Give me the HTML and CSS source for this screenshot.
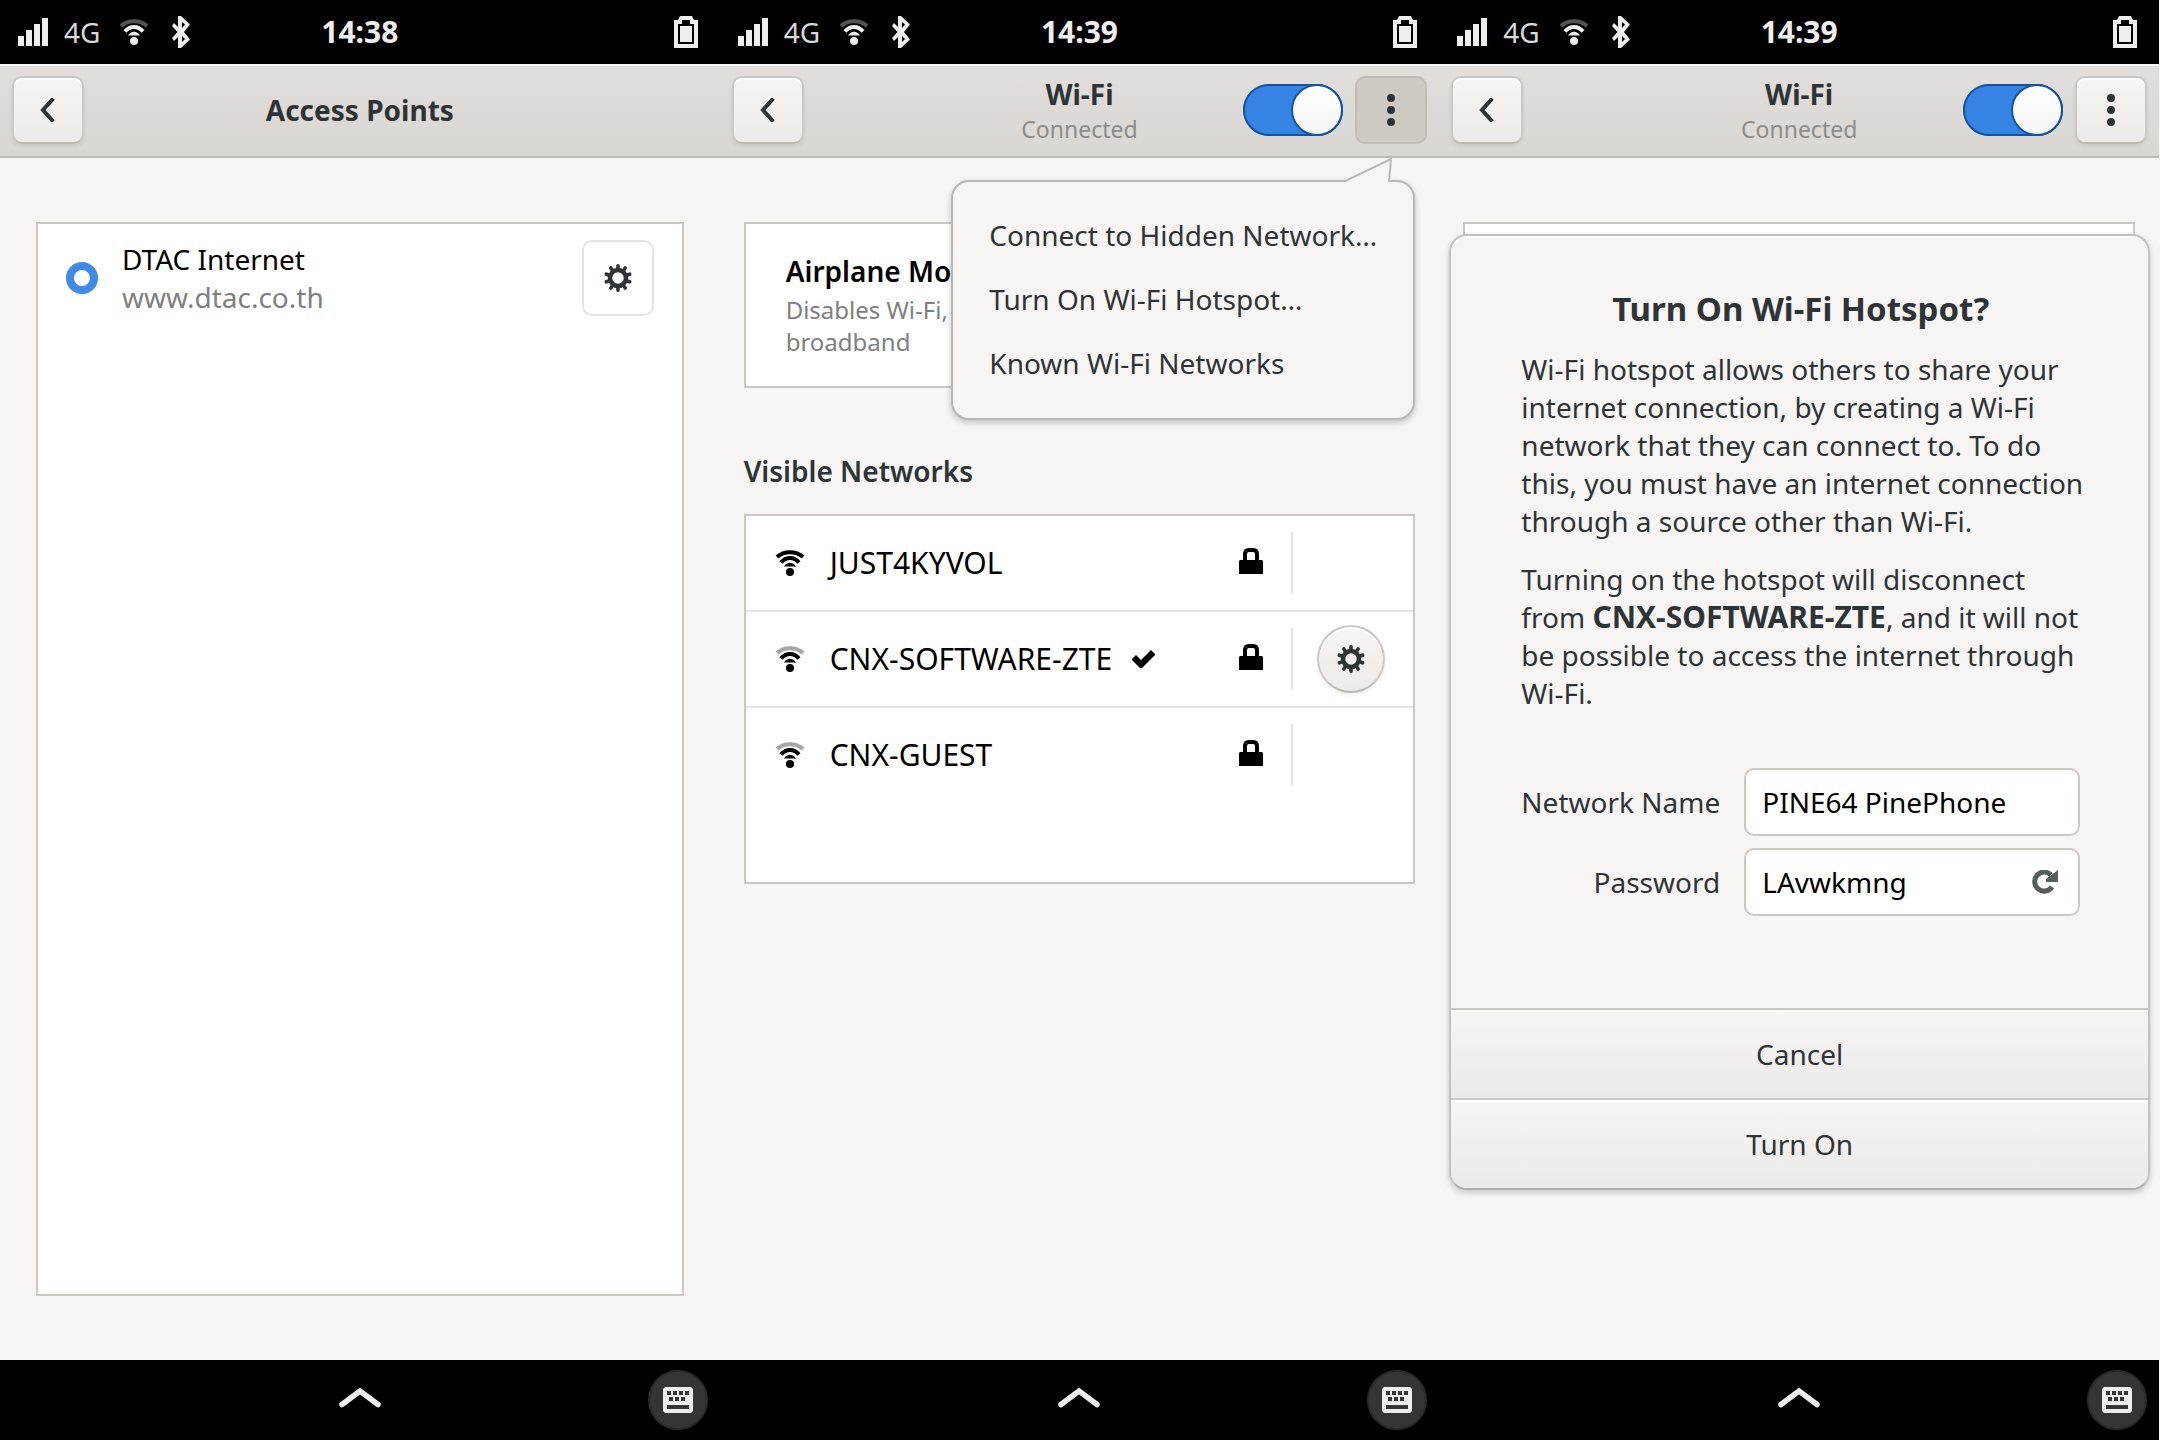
FILE: index.html
```html
<!DOCTYPE html>
<html lang="en">
<head>
<meta charset="utf-8">
<title>Network settings</title>
<link rel="stylesheet" href="styles.css">
</head>
<body>
<svg class="sprite" aria-hidden="true">
  <symbol id="signal" viewBox="0 0 30 28"><path d="M0 18h6v10H0zM8 12h6v16H8zM16 6h6v22h-6zM24 0h6v28h-6z"/></symbol>
  <symbol id="wifi" viewBox="0 0 32 32">
    <path class="arc-outer" d="M3 10C10 3.500 22 3.500 29 10" fill="none" stroke="currentColor" stroke-width="4"/>
    <path d="M7 15.500C12 9.500 20 9.500 25 15.500" fill="none" stroke="currentColor" stroke-width="4"/>
    <path d="M10 19.500C13 14.500 19 14.500 22 19.500z"/>
    <circle cx="16" cy="25" r="4"/>
  </symbol>
  <symbol id="bluetooth" viewBox="0 0 18 32"><path d="M6 0h3l9 8.500-6 7.500 6 7.500L9 32H6V21l-4 4-2-3 5.500-6L0 10l2-3 4 4zM10 6v6l3-3.500zM10 20v6l3-3z"/></symbol>
  <symbol id="battery" viewBox="0 0 24 32"><path fill-rule="evenodd" d="M6 0h12l2 4h4v28H0V4h4zM4 8v20h16V8h-4V4H8v4zM6 10h12v16H6z"/></symbol>
  <symbol id="lock" viewBox="0 0 32 32"><path fill-rule="evenodd" d="M8 13V7q0-6 6-6h4q6 0 6 6v6h3l1 1v13H4V14l1-1zM12 13h8V7q0-2-2-2h-4q-2 0-2 2z"/></symbol>
  <symbol id="check" viewBox="0 0 32 32"><path d="M4 16l4-4 5 5L23 7l4 4v1L14 25h-2l-8-8z"/></symbol>
  <symbol id="gear" viewBox="0 0 32 32">
    <g fill="none" stroke="currentColor" transform="translate(16 16)">
      <circle r="8" stroke-width="4.500"/>
      <path stroke-width="3.600" stroke-linecap="round" d="M0-9V-12.300M0 9V12.300M5.300-7.300L7.200-10M-5.300-7.300L-7.200-10M5.300 7.300L7.200 10M-5.300 7.300L-7.200 10M8.600-2.800L11.700-3.800M-8.600-2.800L-11.700-3.800M8.600 2.800L11.700 3.800M-8.600 2.800L-11.700 3.800"/>
    </g>
  </symbol>
  <symbol id="refresh" viewBox="0 0 26 24"><path d="M19 5A9.500 9.500 0 1 0 20 17" fill="none" stroke="currentColor" stroke-width="5"/><path d="M26 0v12H14V9z"/></symbol>
  <symbol id="back" viewBox="0 0 16 24"><path d="M12 2L3 12l9 10" fill="none" stroke="currentColor" stroke-width="4" stroke-linecap="square"/></symbol>
  <symbol id="dots" viewBox="0 0 8 32"><circle cx="4" cy="4" r="4"/><circle cx="4" cy="16" r="4"/><circle cx="4" cy="28" r="4"/></symbol>
  <symbol id="up" viewBox="0 0 42 20"><path d="M3 16.500L21 3l18 13.500" fill="none" stroke="currentColor" stroke-width="5.500" stroke-linecap="round"/></symbol>
  <symbol id="keyboard" viewBox="0 0 30 26"><path fill-rule="evenodd" d="M2 0h26l2 2v22l-2 2H2l-2-2V2zM4 4v4h4V4zM10 4v4h4V4zM16 4v4h4V4zM22 4v4h4V4zM6 10v4h4v-4zM12 10v4h4v-4zM18 10v4h4v-4zM4 18v4h22v-4z"/></symbol>
</svg>

<div class="screens">
  <section class="phone">
    <div class="statusbar">
      <div class="status-left">
        <svg class="i-signal"><use href="#signal"/></svg><span>4G</span>
        <svg class="icon weak"><use href="#wifi"/></svg>
        <svg class="i-bluetooth"><use href="#bluetooth"/></svg>
      </div>
      <time>14:38</time>
      <svg class="i-battery"><use href="#battery"/></svg>
    </div>
    <header class="headerbar">
      <button class="btn" aria-label="Back"><svg class="i-back"><use href="#back"/></svg></button>
      <div class="titles"><h1>Access Points</h1></div>
      <div class="actions"></div>
    </header>
    <main class="content inset">
      <div class="card grow">
        <div class="ap-row">
          <input class="radio" type="radio" id="dtac" checked>
          <label class="ap-text" for="dtac"><span>DTAC Internet</span><span class="dim">www.dtac.co.th</span></label>
          <button class="btn-plain" aria-label="Options"><svg class="icon"><use href="#gear"/></svg></button>
        </div>
      </div>
    </main>
    <nav class="homebar">
      <button class="home" aria-label="Home"><svg class="i-up"><use href="#up"/></svg></button>
      <button class="osk" aria-label="Keyboard"><svg class="i-keyboard"><use href="#keyboard"/></svg></button>
    </nav>
  </section>

  <section class="phone">
    <div class="statusbar">
      <div class="status-left">
        <svg class="i-signal"><use href="#signal"/></svg><span>4G</span>
        <svg class="icon weak"><use href="#wifi"/></svg>
        <svg class="i-bluetooth"><use href="#bluetooth"/></svg>
      </div>
      <time>14:39</time>
      <svg class="i-battery"><use href="#battery"/></svg>
    </div>
    <header class="headerbar">
      <button class="btn" aria-label="Back"><svg class="i-back"><use href="#back"/></svg></button>
      <div class="titles"><h1>Wi-Fi</h1><p>Connected</p></div>
      <div class="actions">
        <input class="switch" type="checkbox" role="switch" aria-label="Wi-Fi" checked>
        <button class="btn pressed" aria-label="Menu"><svg class="i-dots"><use href="#dots"/></svg></button>
      </div>
    </header>
    <main class="content">
      <div class="card airplane">
        <h2>Airplane Mode</h2>
        <p>Disables Wi-Fi, Bluetooth and mobile broadband</p>
      </div>
      <h2 class="section-title">Visible Networks</h2>
      <ul class="card networks">
        <li><svg class="icon"><use href="#wifi"/></svg><span class="ssid">JUST4KYVOL</span><svg class="icon"><use href="#lock"/></svg><span class="row-end"></span></li>
        <li><svg class="icon weak"><use href="#wifi"/></svg><span class="ssid">CNX-SOFTWARE-ZTE <svg class="icon"><use href="#check"/></svg></span><svg class="icon"><use href="#lock"/></svg><span class="row-end"><button class="btn round" aria-label="Network options"><svg class="icon"><use href="#gear"/></svg></button></span></li>
        <li><svg class="icon weak"><use href="#wifi"/></svg><span class="ssid">CNX-GUEST</span><svg class="icon"><use href="#lock"/></svg><span class="row-end"></span></li>
      </ul>
      <div class="popover">
        <svg class="arrow" viewBox="0 0 48 26"><path class="arrow-fill" d="M0 24L46 1L45 26H0z"/><path class="arrow-line" d="M0 23L46 1L44 24"/></svg>
        <button>Connect to Hidden Network…</button>
        <button>Turn On Wi-Fi Hotspot…</button>
        <button>Known Wi-Fi Networks</button>
      </div>
    </main>
    <nav class="homebar">
      <button class="home" aria-label="Home"><svg class="i-up"><use href="#up"/></svg></button>
      <button class="osk" aria-label="Keyboard"><svg class="i-keyboard"><use href="#keyboard"/></svg></button>
    </nav>
  </section>

  <section class="phone">
    <div class="statusbar">
      <div class="status-left">
        <svg class="i-signal"><use href="#signal"/></svg><span>4G</span>
        <svg class="icon weak"><use href="#wifi"/></svg>
        <svg class="i-bluetooth"><use href="#bluetooth"/></svg>
      </div>
      <time>14:39</time>
      <svg class="i-battery"><use href="#battery"/></svg>
    </div>
    <header class="headerbar">
      <button class="btn" aria-label="Back"><svg class="i-back"><use href="#back"/></svg></button>
      <div class="titles"><h1>Wi-Fi</h1><p>Connected</p></div>
      <div class="actions">
        <input class="switch" type="checkbox" role="switch" aria-label="Wi-Fi" checked>
        <button class="btn" aria-label="Menu"><svg class="i-dots"><use href="#dots"/></svg></button>
      </div>
    </header>
    <main class="content">
      <div class="card airplane"></div>
      <form class="dialog" role="dialog" aria-labelledby="hotspot-title">
        <div class="dialog-body">
          <h2 id="hotspot-title">Turn On Wi-Fi Hotspot?</h2>
          <p>Wi-Fi hotspot allows others to share your internet connection, by creating a Wi-Fi network that they can connect to. To do this, you must have an internet connection through a source other than Wi-Fi.</p>
          <p>Turning on the hotspot will disconnect from&nbsp;<strong>CNX-SOFTWARE-ZTE</strong>, and it will not be possible to access the internet through Wi-Fi.</p>
          <div class="fields">
            <label for="ssid">Network Name</label>
            <div class="entry"><input id="ssid" type="text" value="PINE64 PinePhone"></div>
            <label for="pass">Password</label>
            <div class="entry"><input id="pass" type="text" value="LAvwkmng"><svg class="i-refresh"><use href="#refresh"/></svg></div>
          </div>
        </div>
        <button type="button">Cancel</button>
        <button type="button">Turn On</button>
      </form>
    </main>
    <nav class="homebar">
      <button class="home" aria-label="Home"><svg class="i-up"><use href="#up"/></svg></button>
      <button class="osk" aria-label="Keyboard"><svg class="i-keyboard"><use href="#keyboard"/></svg></button>
    </nav>
  </section>
</div>
</body>
</html>
```
FILE: styles.css
```css
:root {
  --fg: #2e3436;
  --bg: #f6f5f4;
  --line: #cdc7c2;
  --blue: #3584e4;
  --blue-dark: #15539e;
}

*, *::before { box-sizing: border-box; }

body {
  margin: 0;
  background: var(--bg);
  color: var(--fg);
  font: 28px/38px "Noto Sans", "Open Sans", sans-serif;
}

h1, h2, p, ul { margin: 0; padding: 0; }
button, input { margin: 0; padding: 0; border: 0; font: inherit; color: inherit; background: none; }
svg { display: block; flex: none; fill: currentColor; }

.sprite { position: absolute; width: 0; height: 0; }

.screens {
  display: grid;
  grid-template-columns: repeat(3, 1fr);
  min-height: 100vh;
  padding-right: 1px;
}

.phone { display: flex; flex-direction: column; min-width: 0; }

/* Icons */
.icon { width: 32px; height: 32px; }
.weak { --arc-opacity: .35; }
.arc-outer { opacity: var(--arc-opacity, 1); }
.i-signal { width: 30px; height: 28px; }
.i-bluetooth { width: 18px; height: 32px; }
.i-battery { width: 24px; height: 32px; justify-self: end; }
.i-back { width: 16px; height: 24px; }
.i-dots { width: 8px; height: 32px; }
.i-up { width: 42px; height: 20px; }
.i-keyboard { width: 30px; height: 26px; }
.i-refresh { width: 26px; height: 24px; color: #585d5e; }

/* Top status bar */
.statusbar {
  display: grid;
  grid-template-columns: 1fr auto 1fr;
  align-items: center;
  height: 64px;
  padding: 0 22px 0 18px;
  background: #000;
  color: #eeeeec;
}
.status-left { display: flex; align-items: center; gap: 16px; }
.status-left .icon { margin: 0 6px 0 2px; }
.status-left span { color: #d8d8d6; }
.statusbar time { padding-left: 4px; font-size: 30px; font-weight: 700; }

/* Header bar */
.headerbar {
  display: grid;
  grid-template-columns: 1fr auto 1fr;
  align-items: center;
  height: 94px;
  padding: 0 12px;
  border-bottom: 2px solid #bfb8b1;
  background: linear-gradient(#e1dedb, #dad6d2);
  box-shadow: inset 0 2px #f9f8f8;
}
.titles { text-align: center; }
.titles h1 { font-size: 28px; line-height: 38px; font-weight: 700; }
.titles p { font-size: 23px; line-height: 32px; color: #8b8d8c; }
.actions { display: flex; align-items: center; justify-content: flex-end; gap: 12px; }

.btn {
  display: grid;
  place-items: center;
  width: 72px;
  height: 68px;
  border: 2px solid var(--line);
  border-bottom-color: #bfb8b1;
  border-radius: 10px;
  background: linear-gradient(#f6f5f4, #edebe9);
  box-shadow: inset 0 2px #fff, 0 2px 4px rgba(0, 0, 0, .07);
}
.btn.pressed { background: #cfc9c3; border-color: #c3bcb5; box-shadow: none; }
.btn.round { width: 68px; border-radius: 50%; }

.switch {
  appearance: none;
  display: flex;
  justify-content: flex-end;
  width: 100px;
  height: 52px;
  border-radius: 26px;
  background: var(--blue);
  box-shadow: inset 0 0 0 2px var(--blue-dark);
}
.switch::before {
  content: "";
  width: 52px;
  height: 52px;
  border: 2px solid var(--blue-dark);
  border-radius: 50%;
  background: linear-gradient(#fff, #f6f5f4);
}

/* Content area */
.content {
  position: relative;
  display: flex;
  flex: 1;
  flex-direction: column;
  padding: 64px 24px;
}
.inset { padding: 64px 36px; }
.card { border: 2px solid var(--line); background: #fff; }
.grow { flex: 1; }

.ap-row { display: flex; align-items: center; gap: 24px; padding: 16px 28px; color: #000; }
.ap-text { display: flex; flex: 1; flex-direction: column; }
.dim { color: #7f7f7f; }
.radio {
  appearance: none;
  width: 32px;
  height: 32px;
  border: 8px solid #3f8ae5;
  border-radius: 50%;
  background: #fff;
  box-shadow: 0 1px 2px rgba(0, 0, 0, .1);
}
.btn-plain {
  display: grid;
  place-items: center;
  width: 72px;
  height: 76px;
  border: 2px solid #e6e3e0;
  border-radius: 10px;
  color: var(--fg);
}

.airplane { height: 166px; padding: 28px 120px 28px 40px; }
.airplane h2 { margin-bottom: 4px; font-size: 28px; line-height: 38px; font-weight: 600; color: #000; }
.airplane p { font-size: 24px; line-height: 32px; color: #7f7f7f; }
.section-title { margin: 64px 0 24px; font-size: 28px; line-height: 38px; font-weight: 600; }

.networks { height: 370px; list-style: none; color: #000; }
.networks li {
  display: flex;
  align-items: center;
  gap: 24px;
  height: 96px;
  padding: 0 28px;
  border-bottom: 2px solid #e6e6e6;
}
.networks li:last-child { border-bottom: 0; padding-bottom: 2px; }
.ssid { display: flex; flex: 1; align-items: center; gap: 16px; font-size: 30px; }
.row-end {
  display: flex;
  align-items: center;
  width: 94px;
  height: 62px;
  padding-left: 24px;
  border-left: 2px solid #e6e6e6;
}
.row-end .btn { flex: none; color: var(--fg); }

/* Menu opened from the header button */
.popover {
  position: absolute;
  top: 22px;
  right: 24px;
  display: flex;
  flex-direction: column;
  width: 464px;
  padding: 21px 36px 23px;
  border: 2px solid #b9b7b5;
  border-radius: 18px;
  background: var(--bg);
  box-shadow: 0 3px 6px rgba(0, 0, 0, .2);
}
.popover button { height: 64px; text-align: left; white-space: nowrap; }
.arrow { position: absolute; top: -24px; right: 20px; width: 48px; height: 26px; }
.arrow-fill { fill: var(--bg); }
.arrow-line { fill: none; stroke: #b9b7b5; stroke-width: 2; }

/* Hotspot dialog */
.dialog {
  position: absolute;
  top: 76px;
  right: 9px;
  left: 10px;
  overflow: hidden;
  border: 2px solid #c4c2c0;
  border-bottom-color: #b0aeac;
  border-radius: 18px;
  background: var(--bg);
  box-shadow: inset 0 2px #fff, 0 3px 6px rgba(0, 0, 0, .18);
}
.dialog-body { display: flex; flex-direction: column; gap: 20px; padding: 50px 60px 92px 70px; }
.dialog h2 { margin: 0 8px -2px 0; font-size: 33px; line-height: 46px; font-weight: 700; text-align: center; }
.dialog strong { font-size: 30px; }
.fields {
  display: grid;
  grid-template-columns: 1fr 336px;
  align-items: center;
  gap: 12px 24px;
  margin: 36px 8px 0 0;
}
.fields label { text-align: right; white-space: nowrap; }
.entry {
  display: flex;
  align-items: center;
  height: 68px;
  padding: 0 20px 0 16px;
  border: 2px solid var(--line);
  border-radius: 10px;
  background: #fff;
  color: #000;
}
.entry input { flex: 1; min-width: 0; outline: 0; }
.dialog button {
  display: block;
  width: 100%;
  height: 90px;
  border-top: 2px solid var(--line);
  background: linear-gradient(#fff 2px, #f6f5f4 2px, #ebeae8);
}

/* Bottom bar */
.homebar {
  display: grid;
  grid-template-columns: 1fr auto 1fr;
  align-items: center;
  height: 80px;
  padding: 0 12px;
  background: #000;
  color: #eeeeec;
}
.home { grid-column: 2; padding-bottom: 4px; }
.osk {
  display: grid;
  place-items: center;
  justify-self: end;
  width: 60px;
  height: 60px;
  border: 2px solid #2a2a2a;
  border-radius: 50%;
  background: #353535;
}
```
